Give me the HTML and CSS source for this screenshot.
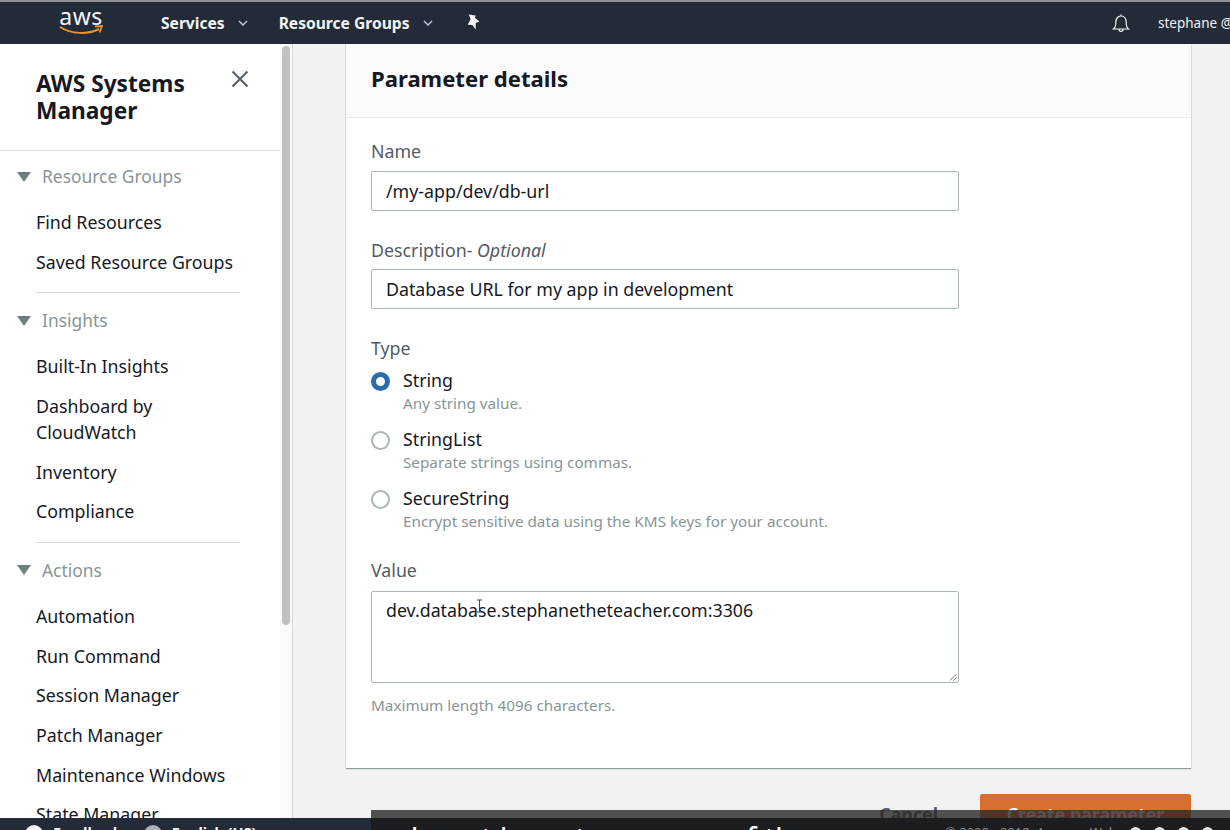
FILE: index.html
```html
<!DOCTYPE html>
<html lang="en">
<head>
    <meta charset="UTF-8">
    <title>AWS Systems Manager - Create parameter</title>
    <link rel="stylesheet" href="styles.css">
</head>
<body>
    <header class="topbar">
        <div class="logo">
            <span class="logo-text">aws</span>
            <svg class="logo-smile" width="44" height="11" viewBox="0 0 44 11">
                <path d="M1 2 C12 9 29 10 40 4" fill="none" stroke="#e8912d" stroke-width="2"/>
                <path d="M36 1.500 L43 1 L40.500 7.500" fill="none" stroke="#e8912d" stroke-width="1.800"/>
            </svg>
        </div>
        <a class="nav-link nav-services">Services</a>
        <svg class="chev" width="10" height="6" viewBox="0 0 10 6"><path d="M1 1 L5 5 L9 1" fill="none" stroke="#c9ccd1" stroke-width="1.400"/></svg>
        <a class="nav-link nav-groups">Resource Groups</a>
        <svg class="chev" width="10" height="6" viewBox="0 0 10 6"><path d="M1 1 L5 5 L9 1" fill="none" stroke="#c9ccd1" stroke-width="1.400"/></svg>
        <svg class="pin" width="15" height="16" viewBox="0 0 14 15"><path d="M3.500 0.500 L10 1.500 L9.200 3.500 L13.500 7 L10 8.500 L10 14.500 L6.800 10.200 L2.500 10 L5.200 5 Z" fill="#f2f3f3"/></svg>
        <div class="topbar-right">
            <svg class="bell" width="18" height="19" viewBox="0 0 18 19"><path d="M1.500 15 C3.500 13.500 3.800 11 3.800 8.500 C3.800 4.500 6 2 9 2 C12 2 14.200 4.500 14.200 8.500 C14.200 11 14.500 13.500 16.500 15 Z M9 0.500 V2 M7 15.500 C7 18 11 18 11 15.500" fill="none" stroke="#f2f3f3" stroke-width="1.200"/></svg>
            <span class="user">stephane @</span>
        </div>
    </header>

    <div class="layout">
        <aside class="sidebar">
            <div class="side-title">
                <h2>AWS Systems Manager</h2>
                <svg class="close" width="18" height="18" viewBox="0 0 18 18"><path d="M1.500 1.500 L16.500 16.500 M16.500 1.500 L1.500 16.500" stroke="#545b64" stroke-width="2"/></svg>
            </div>
            <div class="side-group first">
                <h3><span class="tri"></span>Resource Groups</h3>
                <a>Find Resources</a>
                <a>Saved Resource Groups</a>
            </div>
            <div class="side-group">
                <h3><span class="tri"></span>Insights</h3>
                <a>Built-In Insights</a>
                <a class="two-line">Dashboard by CloudWatch</a>
                <a>Inventory</a>
                <a>Compliance</a>
            </div>
            <div class="side-group">
                <h3><span class="tri"></span>Actions</h3>
                <a>Automation</a>
                <a>Run Command</a>
                <a>Session Manager</a>
                <a>Patch Manager</a>
                <a>Maintenance Windows</a>
                <a>State Manager</a>
            </div>
        </aside>
        <div class="scroll-track"><div class="scroll-thumb"></div></div>

        <main class="content">
            <section class="panel">
                <div class="panel-head"><h1>Parameter details</h1></div>
                <div class="panel-body">
                    <label class="field-label">Name</label>
                    <div class="input">/my-app/dev/db-url</div>

                    <label class="field-label desc-label">Description- <em>Optional</em></label>
                    <div class="input">Database URL for my app in development</div>

                    <label class="field-label">Type</label>
                    <div class="radio">
                        <span class="dot on"></span>
                        <div><div class="radio-name">String</div><div class="hint">Any string value.</div></div>
                    </div>
                    <div class="radio">
                        <span class="dot"></span>
                        <div><div class="radio-name">StringList</div><div class="hint">Separate strings using commas.</div></div>
                    </div>
                    <div class="radio">
                        <span class="dot"></span>
                        <div><div class="radio-name">SecureString</div><div class="hint">Encrypt sensitive data using the KMS keys for your account.</div></div>
                    </div>

                    <label class="field-label value-label">Value</label>
                    <div class="input textarea">
                        dev.database.stephanetheteacher.com:3306
                        <svg class="caret" width="7" height="14" viewBox="0 0 7 14"><path d="M1 1 H6 M3.500 1 V13 M1 13 H6" fill="none" stroke="#444" stroke-width="1"/></svg>
                        <svg class="grip" width="8" height="8" viewBox="0 0 8 8"><path d="M1 7.500 L7.500 1 M4.500 7.500 L7.500 4.500" stroke="#777" stroke-width="1"/></svg>
                    </div>
                    <div class="hint max-hint">Maximum length 4096 characters.</div>
                </div>
            </section>
            <div class="actions">
                <a class="cancel">Cancel</a>
                <button class="primary">Create parameter</button>
            </div>
        </main>
    </div>

    <footer class="console-footer">
        <span class="foot-icon"></span><span class="foot-text">Feedback</span>
        <span class="foot-icon globe"></span><span class="foot-text">English (US)</span>
    </footer>
    <div class="caption">
        <span class="cap-text">do not have to use any of these,</span>
        <span class="cap-copy">&copy; 2008 - 2018, Amazon Web</span>
        <span class="cap-dot"></span>
        <span class="cap-dot"></span>
        <span class="cap-dot"></span>
        <span class="cap-dot"></span>
    </div>
</body>
</html>
```

FILE: styles.css
```css
* {
    box-sizing: border-box;
}
html, body {
    height: 830px;
}
body {
    margin: 0;
    overflow: hidden;
    position: relative;
    font-family: "Noto Sans", Arial, sans-serif;
    font-size: 17.800px;
    color: #16191f;
    background-color: #f2f2f2;
}

/* top bar */
.topbar {
    height: 44px;
    border-top: 2px solid #8d9096;
    background-color: #232b38;
    color: #f2f3f3;
    display: flex;
    align-items: center;
    font-size: 15.600px;
    font-weight: 700;
}
.logo {
    width: 44px;
    margin-left: 59px;
    margin-right: 58px;
    display: flex;
    flex-direction: column;
    align-items: center;
    height: 36px;
}
.logo-text {
    font-size: 23px;
    font-weight: 400;
    line-height: 20px;
    letter-spacing: 0.5px;
    margin-top: 1px;
}
.logo-smile {
    margin-top: -1px;
}
.nav-services {
    margin-right: 13px;
}
.nav-groups {
    margin-left: 31px;
    margin-right: 14px;
}
.pin {
    margin-left: 32px;
    margin-top: -2px;
}
.topbar-right {
    margin-left: auto;
    display: flex;
    align-items: center;
    white-space: nowrap;
    width: 118px;
    overflow: hidden;
}
.bell {
    margin-right: 28px;
    flex: none;
}
.user {
    font-size: 13.500px;
    font-weight: 400;
}

/* layout */
.layout {
    display: flex;
    height: 786px;
}
.sidebar {
    width: 280px;
    flex: none;
    background-color: #fff;
    overflow: hidden;
}
.side-title {
    height: 107px;
    padding: 27px 31px 0 36px;
    border-bottom: 1px solid #dfe2e5;
    display: flex;
    justify-content: space-between;
    align-items: flex-start;
}
.side-title h2 {
    margin: 0;
    width: 170px;
    font-size: 22.700px;
    line-height: 26.500px;
    font-weight: 700;
}
.close {
    margin-top: -1px;
}
.side-group {
    margin: 0 40px 0 36px;
    padding-top: 15px;
    padding-bottom: 10px;
    border-bottom: 1px solid #d5dbdb;
}
.side-group.first {
    padding-top: 13px;
}
.side-group:last-child {
    border-bottom: none;
}
.side-group h3 {
    margin: 0 0 14px -19px;
    font-size: 17.400px;
    line-height: 25px;
    font-weight: 400;
    color: #879596;
    display: flex;
    align-items: center;
}
.tri {
    width: 0;
    height: 0;
    margin-right: 11px;
    border-left: 7px solid transparent;
    border-right: 7px solid transparent;
    border-top: 10px solid #6f7e7e;
}
.side-group a {
    display: block;
    padding: 7px 0;
    line-height: 25.700px;
    white-space: nowrap;
}
.side-group a.two-line {
    white-space: normal;
    width: 160px;
}

/* scrollbar next to the sidebar */
.scroll-track {
    width: 13px;
    flex: none;
    padding: 2px 2px 0;
    background-color: #fafafa;
    border-right: 1px solid #d5d8da;
}
.scroll-thumb {
    height: 579px;
    border-radius: 4px;
    background-color: #c1c1c1;
}

/* main panel */
.content {
    flex: 1;
    padding: 0 39px 0 53px;
    overflow: hidden;
}
.panel {
    background-color: #fff;
    box-shadow: 0 1px 1px 0 rgba(0, 28, 36, 0.4), 1px 0 1px -1px rgba(0, 28, 36, 0.25), -1px 0 1px -1px rgba(0, 28, 36, 0.25);
}
.panel-head {
    height: 74px;
    padding: 0 25px;
    display: flex;
    align-items: center;
    background-color: #fafafa;
    border-bottom: 1px solid #eaeded;
}
.panel-head h1 {
    margin: 0;
    font-size: 22.100px;
    font-weight: 700;
    padding-bottom: 6px;
}
.panel-body {
    height: 650px;
    padding: 20px 26px 0 25px;
}
.field-label {
    display: block;
    height: 26px;
    line-height: 26px;
    color: #545b64;
    margin-bottom: 7px;
}
.desc-label {
    margin-bottom: 6px;
}
.field-label em {
    font-style: italic;
}
.input {
    width: 588px;
    height: 40px;
    padding: 0 14px;
    line-height: 38px;
    border: 1px solid #aab7b8;
    border-radius: 2px;
    background-color: #fff;
    margin-bottom: 26px;
    white-space: nowrap;
}
.radio {
    display: flex;
    gap: 13px;
    height: 59px;
}
.dot {
    width: 19px;
    height: 19px;
    margin-top: 4px;
    flex: none;
    border-radius: 50%;
    border: 2px solid #aab7b8;
    background-color: #fff;
}
.dot.on {
    border: 5px solid #2b6cab;
}
.radio-name {
    line-height: 25px;
}
.hint {
    font-size: 15.250px;
    line-height: 20px;
    color: #879596;
}
.value-label {
    margin-top: 12px;
    margin-bottom: 8px;
}
.textarea {
    height: 92px;
    margin-bottom: 0;
    line-height: 36px;
    position: relative;
}
.caret {
    position: absolute;
    left: 104px;
    top: 7px;
}
.grip {
    position: absolute;
    right: 1px;
    bottom: 1px;
}
.max-hint {
    margin-top: 12px;
}

/* action row, cut off by the footer */
.actions {
    margin-top: 26px;
    display: flex;
    justify-content: flex-end;
    align-items: center;
    gap: 42px;
}
.cancel {
    font-weight: 700;
    color: #545b64;
}
.primary {
    width: 211px;
    height: 40px;
    border: none;
    border-radius: 2px;
    background-color: #d86f31;
    color: #fff;
    font-family: inherit;
    font-size: 17.800px;
    font-weight: 700;
}

/* footer and the video caption bar lying over it */
.console-footer {
    position: absolute;
    left: 0;
    right: 0;
    bottom: 0;
    height: 12px;
    background-color: #232b38;
    color: #f2f3f3;
    font-size: 14.500px;
    line-height: 29px;
    padding-left: 25px;
    display: flex;
    overflow: hidden;
}
.foot-icon {
    width: 18px;
    height: 18px;
    flex: none;
    margin-top: 7px;
    border-radius: 50%;
    background-color: #f2f3f3;
}
.foot-icon.globe {
    margin-left: 22px;
    background-color: #aab0b8;
}
.foot-text {
    margin-left: 10px;
    font-weight: 700;
}
.caption {
    position: absolute;
    left: 371px;
    right: 0;
    bottom: 0;
    height: 20px;
    overflow: hidden;
    display: flex;
    align-items: flex-start;
    background-image: linear-gradient(rgba(40, 40, 40, 0.8) 8px, #1c1d20 8px);
    color: #fff;
    padding-left: 29px;
    white-space: nowrap;
}
.cap-text {
    width: 545px;
    flex: none;
    font-size: 30px;
    line-height: 57px;
}
.cap-copy {
    width: 185px;
    flex: none;
    font-size: 13px;
    line-height: 44px;
    color: #8a8a8a;
}
.cap-dot {
    width: 11px;
    height: 11px;
    flex: none;
    margin: 17px 13px 0 0;
    border-radius: 50%;
    background-color: #e6e6e6;
}
```
